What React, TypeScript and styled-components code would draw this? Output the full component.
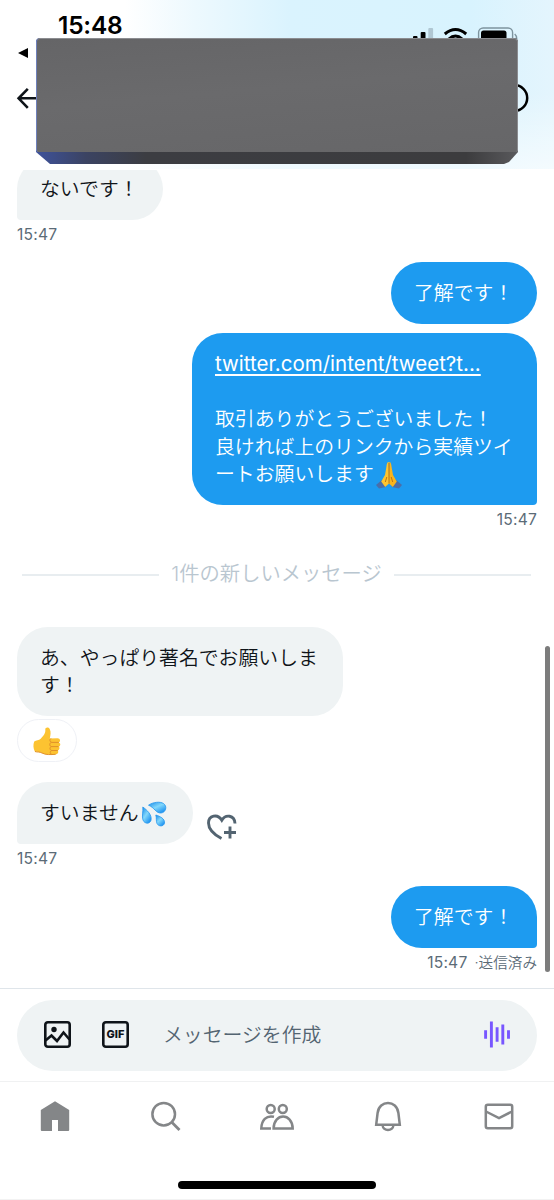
import React from "react";
import styled, { createGlobalStyle } from "styled-components";

const Global = createGlobalStyle`
  * { box-sizing: border-box; }
  body { margin: 0; background: #fff; }
`;

const Screen = styled.div`
  width: 554px;
  height: 1200px;
  display: flex;
  flex-direction: column;
  overflow: hidden;
  background: #fff;
  color: #0f1419;
  font-family: Inter, "Noto Sans CJK JP", sans-serif;
  border-bottom: 1px solid #f2f2f2;
`;

const Header = styled.header`
  position: relative;
  flex: none;
  height: 169px;
  background:
    linear-gradient(to bottom, rgba(255, 255, 255, 0) 55%, rgba(255, 255, 255, 0.6) 100%),
    linear-gradient(to right, #fff 0, #fff 125px, #edf9fe 195px, #daf3fe 290px, #d8f3fe 470px, #e4f5fd 554px);
`;

const StatusRow = styled.div`
  display: flex;
  justify-content: space-between;
  align-items: center;
  height: 50px;
  padding: 0 36px 0 58px;
`;

const Clock = styled.span`
  font-size: 24.5px;
  font-weight: 600;
  line-height: 30px;
  letter-spacing: -0.2px;
  color: #000;
`;

const StatusIcons = styled.svg`
  display: block;
  width: 106px;
  height: 20px;
  margin-top: 20px;
`;

const BackApp = styled.svg`
  display: block;
  width: 12px;
  height: 12px;
  margin: -3px 0 0 17px;
`;

const TitleRow = styled.div`
  display: flex;
  justify-content: space-between;
  align-items: center;
  height: 30px;
  margin-top: 24px;
  padding: 0 25px 0 15px;
`;

const Cover = styled.div`
  position: absolute;
  left: 36px;
  top: 38px;
  width: 482px;
  height: 126px;
  border-radius: 4px 4px 0 0;
  clip-path: polygon(0 0, 100% 0, 100% 114px, calc(100% - 9px) 124px, calc(100% - 14px) 100%, 14px 100%, 0 114px);
  background: linear-gradient(to right, #3e529b 0, #3b4362 50px, #3c3d42 110px, #3c3c3e 430px, #59595c 482px);
  overflow: hidden;
`;

const CoverFace = styled.div`
  height: 114px;
  border: solid #8b8c90;
  border-width: 1px 1px 0 1px;
  border-left-color: #6e80bb;
  border-radius: 4px 4px 2px 2px;
  background: linear-gradient(175deg, #656567 0%, #6a6a6c 45%, #666668 100%);
`;

const Chat = styled.main`
  position: relative;
  flex: none;
  display: flex;
  flex-direction: column;
  height: 818px;
  margin-top: 1px;
  padding: 0 17px;
  overflow: hidden;
`;

const Row = styled.div<{ $mine?: boolean; $top?: number }>`
  display: flex;
  flex: none;
  justify-content: ${(p) => (p.$mine ? "flex-end" : "flex-start")};
  margin-top: ${(p) => p.$top ?? 0}px;
`;

const Bubble = styled.div<{ $mine?: boolean; $tail?: boolean; $w: number }>`
  width: ${(p) => p.$w}px;
  padding: 18px 0 16.5px 23px;
  border-radius: 31px;
  ${(p) => p.$tail && (p.$mine ? "border-bottom-right-radius: 4px;" : "border-bottom-left-radius: 4px;")}
  background: ${(p) => (p.$mine ? "#1d9bf0" : "#eff3f4")};
  color: ${(p) => (p.$mine ? "#fff" : "#0f1419")};
  font-size: 19.85px;
  font-weight: 350;
  line-height: 27.5px;
  white-space: pre;
`;

const Link = styled.span`
  font-size: 20.5px;
  font-weight: 400;
  line-height: 20px;
  text-decoration: underline;
  text-decoration-thickness: 1.5px;
  text-underline-offset: 3px;
`;

const Time = styled.div<{ $mine?: boolean }>`
  flex: none;
  height: 20px;
  margin-top: 4.5px;
  margin-bottom: 0.5px;
  font-size: 15.6px;
  line-height: 20px;
  letter-spacing: 0.2px;
  color: #5b6b77;
  text-align: ${(p) => (p.$mine ? "right" : "left")};
`;

const Sent = styled.span`
  margin-left: 2.5px;
  font-size: 14.6px;
  font-weight: 350;
  letter-spacing: 0;
`;

const Divider = styled.div`
  display: flex;
  flex: none;
  align-items: center;
  gap: 12px;
  height: 30px;
  margin: 28px 6px 0 5px;
  padding-top: 1px;
  font-size: 20.3px;
  font-weight: 350;
  line-height: 26px;
  color: #b9c6d0;
  white-space: nowrap;

  &::before,
  &::after {
    content: "";
    flex: 1;
    height: 1.5px;
    margin-top: 3px;
    background: #e8edf0;
  }
`;

const Reaction = styled.div`
  display: flex;
  flex: none;
  align-items: center;
  justify-content: center;
  width: 60px;
  height: 43px;
  margin-top: 3px;
  border: 1.5px solid #eff1f6;
  border-radius: 22px;
`;

const Emoji = styled.svg`
  display: inline-block;
  width: 28px;
  height: 28px;
  margin: -4px 0 -4px 1px;
  vertical-align: -4px;
`;

const AddReaction = styled.svg`
  width: 32px;
  height: 28px;
  margin: 31px 0 0 13px;
`;

const Scrollbar = styled.div`
  position: absolute;
  right: 4px;
  top: 476px;
  width: 5px;
  height: 326px;
  border-radius: 3px;
  background: #7c7c7c;
`;

const Composer = styled.div`
  flex: none;
  height: 94px;
  padding: 11px 17px 0;
  border-top: 1px solid #dfe5ea;
  border-bottom: 1px solid #f0f1f2;
`;

const Field = styled.div`
  display: flex;
  align-items: center;
  height: 70.5px;
  padding: 0 25px 0 26px;
  border-radius: 36px;
  background: #eff3f4;
`;

const Placeholder = styled.span`
  flex: 1;
  margin-left: 33px;
  font-size: 19.85px;
  font-weight: 350;
  line-height: 28px;
  color: #536471;
`;

const FieldIcon = styled.svg<{ $gap?: number }>`
  width: 29px;
  height: 29px;
  margin: -1px 0 0 ${(p) => p.$gap ?? 0}px;
`;

const Tabs = styled.nav`
  display: grid;
  grid-template-columns: repeat(5, 1fr);
  justify-items: center;
  padding-top: 16px;
  height: 99px;
`;

const TabIcon = styled.svg`
  width: 36px;
  height: 36px;
  fill: none;
  stroke: #848688;
  stroke-width: 2.5;
`;

const HomeBar = styled.div`
  flex: none;
  align-self: center;
  width: 198px;
  height: 8px;
  border-radius: 4px;
  background: #000;
`;

const Pray = () => (
  <Emoji viewBox="0 0 28 28" role="img" aria-label="お願い">
    <path d="M1 24 L8 18 L13 21 L11 26 L4 27.5 Z" fill="#4a6ea9" />
    <path d="M27 24 L20 18 L15 21 L17 26 L24 27.5 Z" fill="#4a6ea9" />
    <path d="M13.8 1 C12 1 11.7 3 11.4 6 L10 14 L6.2 20.5 L10.2 26 L14 22.5 Z" fill="#fdc52f" />
    <path d="M14.2 1 C16 1 16.3 3 16.6 6 L18 14 L21.8 20.5 L17.8 26 L14 22.5 Z" fill="#f8b51e" />
    <path d="M14 2 V22.5 M11.8 16 L10.3 21 M16.2 16 L17.7 21" fill="none" stroke="#bd7415" strokeWidth="1" />
  </Emoji>
);

const Sweat = () => (
  <Emoji viewBox="0 0 28 28" role="img" aria-label="汗">
    <defs>
      <linearGradient id="drop" x1="0" y1="0" x2="0.8" y2="1">
        <stop offset="0" stopColor="#1689e8" />
        <stop offset="0.5" stopColor="#83d8fb" />
        <stop offset="1" stopColor="#168df0" />
      </linearGradient>
    </defs>
    <g fill="url(#drop)" stroke="#2597ed" strokeWidth="0.8">
      <path d="M8.5 5.2 C13 2 20 1.3 23.5 3.5 C27.5 6.2 26 12.5 21 13 C16 13.4 14.5 7.5 8.5 5.2 Z" />
      <path d="M2.8 7 C7 10 12.3 15 11 20.3 C9.8 24.4 4.5 24 3 20 C1.6 16 3.3 12 2.8 7 Z" />
      <path d="M15.8 15 C20 16.2 25.2 19 24.5 23 C23.7 27 18.4 26.6 17 23.5 C15.8 20.7 16.8 18 15.8 15 Z" />
    </g>
  </Emoji>
);

const ThumbsUp = () => (
  <svg width="30" height="30" viewBox="0 0 30 30" role="img" aria-label="いいね">
    <path
      d="M2.2 15.5 C4 14 7 14.5 8.7 12.8 C11 10 13.8 7.6 13.3 3.4 C13.2 1.3 16.4 .7 17.7 3 C19.3 5.8 18.4 9.6 17.8 12.4 L25.5 12.2 C28.6 12.2 28.7 15.7 26.8 16.4 C29 17.2 28.7 20 26.5 20.6 C28.3 21.5 27.6 24 25.7 24.5 C27 25.8 26 28.2 23.7 28.3 C18.5 28.7 13.8 29 10 27 C7.6 25.7 5 26.4 2.8 25.5 C1.2 22.4 1 18.7 2.2 15.5 Z"
      fill="#fcc331"
    />
    <path
      d="M26.8 16.4 H19.8 C17.6 16.2 17.3 13.4 19 12.4 M26.5 20.6 H19.8 C17.2 20.5 17.1 17.1 19.4 16.4 M25.7 24.5 H20 C17.5 24.4 17.3 21.2 19.5 20.6 M20 28.4 C17.6 28 17.7 25.2 19.8 24.5 M3 25.5 C5 26.3 7.6 25.6 10 27 C13.8 29 18.5 28.7 23.7 28.3"
      fill="none"
      stroke="#e0912a"
      strokeWidth="1"
    />
  </svg>
);

export default function App() {
  return (
    <Screen>
      <Global />
      <Header>
        <StatusRow>
          <Clock>15:48</Clock>
          <StatusIcons viewBox="412 25 106 20">
            <rect x="413" y="36" width="4.5" height="8" rx="1" fill="#000" />
            <rect x="420.7" y="32" width="4.8" height="12" rx="1" fill="#000" />
            <rect x="428.3" y="28" width="4.8" height="16" rx="1" fill="#b0c7d3" />
            <g fill="none" stroke="#000" strokeWidth="3">
              <path d="M444.8 34 Q455.5 25 466.2 34" />
              <path d="M448.8 39 Q455.5 33 462.2 39" />
            </g>
            <rect x="478.6" y="28" width="34" height="17" rx="4.5" fill="none" stroke="#7e949e" strokeWidth="1.4" />
            <rect x="481" y="30.5" width="25.5" height="13" rx="2.5" fill="#000" />
            <path d="M514.7 34 q2 1.5 2 5" fill="none" stroke="#7e949e" strokeWidth="1.5" />
          </StatusIcons>
        </StatusRow>
        <BackApp viewBox="0 0 12 12">
          <path d="M1 6 L11 1 V11 Z" fill="#000" />
        </BackApp>
        <TitleRow>
          <svg width="26" height="24" viewBox="0 0 26 24" fill="none" stroke="#0f1419" strokeWidth="2.6">
            <path d="M12.8 2.8 L3.6 12.3 L12.8 21.8 M3.6 12.3 H26" />
          </svg>
          <svg width="30" height="30" viewBox="0 0 30 30" fill="none" stroke="#000" strokeWidth="2.5">
            <circle cx="15.2" cy="15" r="13" />
          </svg>
        </TitleRow>
        <Cover>
          <CoverFace />
        </Cover>
      </Header>

      <Chat>
        <Row $top={-12}>
          <Bubble $w={146} $tail>ないです！</Bubble>
        </Row>
        <Time>15:47</Time>
        <Row $mine $top={17}>
          <Bubble $w={146} $mine>了解です！</Bubble>
        </Row>
        <Row $mine $top={9}>
          <Bubble $w={345} $mine $tail>
            <Link>twitter.com/intent/tweet?t...</Link>
            {"\n\n取引ありがとうございました！\n良ければ上のリンクから実績ツイ\nートお願いします"}
            <Pray />
          </Bubble>
        </Row>
        <Time $mine>15:47</Time>
        <Divider>1件の新しいメッセージ</Divider>
        <Row $top={38.5}>
          <Bubble $w={326}>{"あ、やっぱり著名でお願いしま\nす！"}</Bubble>
        </Row>
        <Reaction>
          <ThumbsUp />
        </Reaction>
        <Row $top={20}>
          <Bubble $w={176} $tail>
            すいません
            <Sweat />
          </Bubble>
          <AddReaction viewBox="0 0 32 28" fill="none" stroke="#536471" strokeWidth="2.9">
            <path d="M15.5 25.6 C8 21.5 2.5 16.3 2.5 10 C2.5 2.5 11.5 .2 15.8 7.2 C19.5 1 28.5 1.8 29 10.5" />
            <path d="M24 13.5 V25.5 M18 19.5 H30" />
          </AddReaction>
        </Row>
        <Time>15:47</Time>
        <Row $mine $top={17}>
          <Bubble $w={146} $mine $tail>了解です！</Bubble>
        </Row>
        <Time $mine>
          15:47 <Sent>·送信済み</Sent>
        </Time>
        <Scrollbar />
      </Chat>

      <Composer>
        <Field>
          <FieldIcon viewBox="0 0 29 29" fill="none" stroke="#0f1419" strokeWidth="2.6">
            <rect x="2.3" y="2.3" width="24.4" height="24.4" rx="2.5" />
            <circle cx="11" cy="9.5" r="2.7" fill="#0f1419" stroke="none" />
            <path d="M2.5 20.5 L8.5 15.5 L14 21 L20.5 12.5 L26.5 19.5" />
          </FieldIcon>
          <FieldIcon $gap={29} viewBox="0 0 29 29">
            <rect x="2.3" y="2.3" width="24.4" height="24.4" rx="2.5" fill="none" stroke="#0f1419" strokeWidth="2.6" />
            <text x="14.5" y="18.4" textAnchor="middle" fontFamily="Inter, sans-serif" fontSize="11" fontWeight="800" fill="#0f1419">
              GIF
            </text>
          </FieldIcon>
          <Placeholder>メッセージを作成</Placeholder>
          <FieldIcon viewBox="0 0 29 29" stroke="#7856ff" strokeWidth="2.9">
            <path d="M2.6 10.2 V18.8 M8.4 1.5 V27.5 M14.1 7.3 V21.7 M19.8 4.4 V24.6 M25.5 10.2 V18.8" />
          </FieldIcon>
        </Field>
      </Composer>

      <Tabs>
        <TabIcon viewBox="0 0 36 36">
          <path d="M18 3.2 L32.2 12 V32 Q32.2 33 31.2 33 H21 V22 H15 V33 H4.8 Q3.8 33 3.8 32 V12 Z" fill="#848688" stroke="none" />
        </TabIcon>
        <TabIcon viewBox="0 0 36 36">
          <circle cx="15.7" cy="16.2" r="11.3" />
          <path d="M23.8 24.3 L31.5 32" strokeWidth="2.8" />
        </TabIcon>
        <TabIcon viewBox="0 0 36 36">
          <circle cx="11.7" cy="11" r="4" />
          <circle cx="23.8" cy="11" r="4" />
          <path d="M15 18.8 C7 17 2.6 22.5 2.3 30.5 H12" />
          <path d="M14.6 30.5 C14.8 14.6 33.4 14.6 33.7 30.5 Z" />
        </TabIcon>
        <TabIcon viewBox="0 0 36 36">
          <path d="M6.2 26.7 L7.6 15 C9 1.6 27 1.6 28.4 15 L29.8 26.7 Z" />
          <path d="M12.5 27 C13 33.5 23 33.5 23.5 27" />
        </TabIcon>
        <TabIcon viewBox="0 0 36 36">
          <rect x="4.8" y="6.8" width="26.4" height="23.4" rx="2" />
          <path d="M5 13.5 L18 20 L31 13.5" />
        </TabIcon>
      </Tabs>
      <HomeBar />
    </Screen>
  );
}
